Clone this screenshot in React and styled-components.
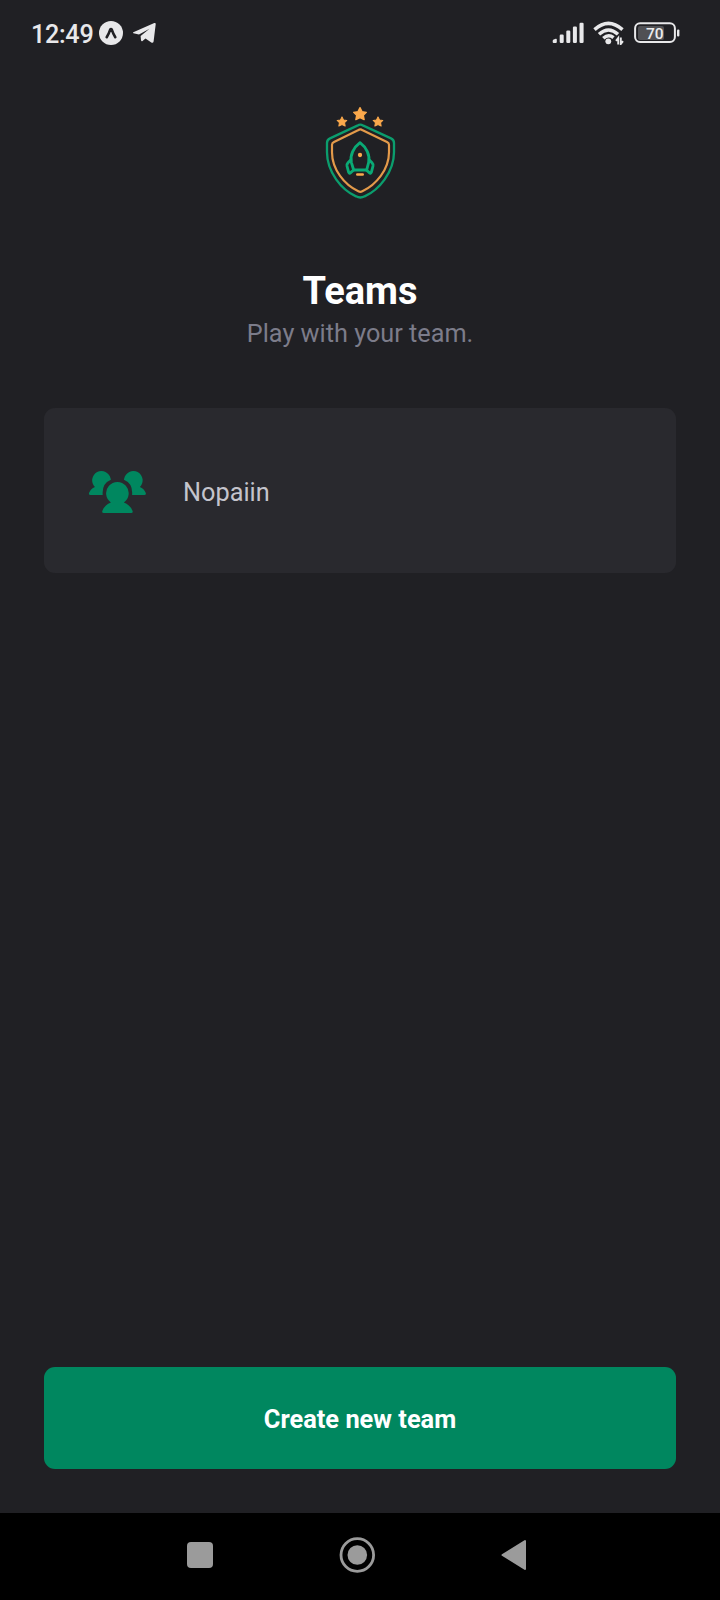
import React from "react";
import styled, { createGlobalStyle } from "styled-components";

const GlobalStyle = createGlobalStyle`
  * { box-sizing: border-box; }
  body { margin: 0; background: #202024; }
`;

const Screen = styled.div`
  width: 720px;
  height: 1600px;
  display: flex;
  flex-direction: column;
  background: #202024;
  font-family: Roboto, "Liberation Sans", sans-serif;
`;

const StatusBar = styled.header`
  height: 66px;
  flex: none;
  display: flex;
  align-items: center;
  justify-content: space-between;
  padding: 0 40px 0 31px;
  color: #e8e8ea;
`;

const StatusGroup = styled.div`
  display: flex;
  align-items: center;
  gap: ${(p) => p.$gap}px;
`;

const Clock = styled.span`
  width: 63px;
  font-size: 25.2px;
  font-weight: 500;
  line-height: 30px;
  letter-spacing: -0.3px;
  padding: 3px 0 0;
`;

const Icon = styled.svg`
  display: block;
  flex: none;
`;

const BatteryLabel = styled.text`
  font-family: Roboto, sans-serif;
  font-size: 15.5px;
  font-weight: 500;
  fill: #ececee;
`;

const Content = styled.main`
  flex: 1;
  display: flex;
  flex-direction: column;
  padding: 29px 44px 44px;
`;

const Logo = styled(Icon)`
  align-self: center;
`;

const Heading = styled.div`
  margin-top: 58px;
  text-align: center;
`;

const Title = styled.h1`
  margin: 0;
  font-size: 38px;
  font-weight: 700;
  line-height: 47px;
  color: #fff;
`;

const Subtitle = styled.p`
  margin: 4px 0 0;
  font-size: 25.25px;
  line-height: 30px;
  color: #7c7c8a;
`;

const TeamCard = styled.button`
  width: 100%;
  height: 165px;
  margin-top: 59px;
  padding: 3px 44px 0;
  display: flex;
  align-items: center;
  gap: 36px;
  border: 0;
  border-radius: 11px;
  background: #29292e;
  color: #c4c4cc;
  font: 400 25.3px/30px Roboto, "Liberation Sans", sans-serif;
`;

const TeamName = styled.span`
  padding-top: 2px;
`;

const PrimaryButton = styled.button`
  width: 100%;
  height: 102px;
  margin-top: auto;
  padding: 2px 0 0;
  border: 0;
  border-radius: 11px;
  background: #00875f;
  color: #fff;
  font: 700 25.4px/30px Roboto, "Liberation Sans", sans-serif;
`;

const NavBar = styled.nav`
  height: 87px;
  flex: none;
  display: flex;
  align-items: center;
  justify-content: center;
  gap: 117px;
  padding: 0 6px 3px 0;
  background: #000;
`;

const STAR = "M0 -19L6 -7L19 -5L10 4L12.500 17L0 11L-12.500 17L-10 4L-19 -5L-6 -7Z";

function Crest() {
  return (
    <Logo width="100" height="115" viewBox="0 0 300 345" fill="none" strokeLinejoin="round" strokeLinecap="round">
      <g fill="#fba94c" stroke="#fba94c" strokeWidth="4">
        <path d={STAR} transform="translate(150 57)" />
        <path d={STAR} transform="translate(96 80) scale(.76)" />
        <path d={STAR} transform="translate(204 80) scale(.76)" />
      </g>
      <path
        d="M151 89Q155 89 160 92L243 130Q252 134 252 144V172C252 231 207 285 164 304Q151 311 138 304C95 285 51 231 51 172V144Q51 134 60 130L142 92Q147 89 151 89Z"
        stroke="#0b9d6d" strokeWidth="7"
      />
      <path
        d="M151 103Q154 103 158 106L231 141Q237 144 237 149V172C237 224 198 270 157 289Q151 292 145 289C104 270 66 224 66 172V149Q66 144 72 141L144 106Q148 103 151 103Z"
        stroke="#e39a4a" strokeWidth="6.500"
      />
      <g stroke="#0aaa75" strokeWidth="8.500">
        <path d="M150 143C131 157 119 181 124 202L131 225H170L176 202C181 181 169 157 150 143Z" />
        <path d="M122 195L114 203Q110 207 111 213L116 232Q118 237 122 233L131 225" />
        <path d="M178 195L186 203Q190 207 189 213L184 232Q182 237 178 233L169 225" />
      </g>
      <circle cx="150" cy="180" r="6.500" fill="#fba94c" />
      <path d="M142 238.500H158" stroke="#fba94c" strokeWidth="8" />
    </Logo>
  );
}

function ExpoIcon() {
  return (
    <Icon width="24" height="24" viewBox="0 0 24 24">
      <circle cx="12" cy="12" r="12" fill="#e8e8ea" />
      <path d="M7.700 16.200Q10 12.500 11.200 8.600Q12 7.500 12.800 8.600Q14 12.500 16.300 16.200" fill="none" stroke="#202024" strokeWidth="2.600" strokeLinecap="round" strokeLinejoin="round" />
    </Icon>
  );
}

function TelegramIcon() {
  return (
    <Icon width="24" height="22" viewBox="0 0 24 22">
      <path d="M.3 10.300L21.300 1Q22.900.6 22.700 2.200L20.600 19.500Q20.100 21.500 18.300 20.500L12.500 16.600L9.500 19Q8.300 19.700 8 18L7.600 14L16.500 6.800L6 12.400L.4 11.200Q-.3 10.800.3 10.300Z" fill="#e8e8ea" />
    </Icon>
  );
}

function SignalIcon() {
  return (
    <Icon width="32" height="22" viewBox="0 0 32 22" fill="#e8e8ea">
      <path d="M.7 19Q.7 18 1.700 17.600L3.700 16.800Q4.800 16.500 4.800 17.500V20Q4.800 21 3.800 21H1.700Q.7 21 .7 20Z" />
      <rect x="7.700" y="12.500" width="4" height="8.500" rx="1.200" />
      <rect x="14.300" y="8.500" width="4" height="12.500" rx="1.200" />
      <rect x="20.900" y="4.500" width="4" height="16.500" rx="1.200" />
      <rect x="27.500" y=".7" width="4.100" height="20.300" rx="1.200" />
    </Icon>
  );
}

function WifiIcon() {
  return (
    <Icon width="32" height="24" viewBox="0 0 32 24" fill="none" stroke="#e8e8ea">
      <path d="M1.500 8.600Q15.300 -3.800 29.500 8.600M6 13.200Q15.500 4.800 25 13.200M10.300 17.200Q15.500 12.600 20.500 16.700" strokeWidth="3.500" />
      <circle cx="15.300" cy="20.300" r="2.900" fill="#e8e8ea" stroke="none" />
      <path d="M25.200 23.500V17L23 19.800M27.800 16.500V23L30 20.200" strokeWidth="1.900" />
    </Icon>
  );
}

function BatteryIcon() {
  return (
    <Icon width="46" height="22" viewBox="0 0 46 22">
      <rect x="4" y="4" width="26" height="14" rx="2" fill="#505054" />
      <rect x="1.100" y="1.300" width="39.800" height="18.600" rx="5" fill="none" stroke="#e8e8ea" strokeWidth="2" />
      <rect x="43" y="7.500" width="2.400" height="7" rx="1" fill="#e8e8ea" />
      <BatteryLabel x="20.700" y="16.500" textAnchor="middle">70</BatteryLabel>
    </Icon>
  );
}

function TeamIcon() {
  return (
    <Icon width="59" height="58" viewBox="0 0 59 58" fill="#00875f">
      <path d="M22.600 15.600A9.300 9.300 0 1 0 6.900 23.900Q2.800 25.500 1 30Q.6 31.900 2.400 32H14.700Q13.700 20.500 22.900 16.800Z" />
      <path d="M36.200 15.600A9.300 9.300 0 1 1 51.900 23.900Q56 25.500 57.800 30Q58.200 31.900 56.400 32H44.100Q45.100 20.500 35.900 16.800Z" />
      <path d="M22.900 39.500A11.300 11.300 0 1 1 35.900 39.500Q42 41.900 44.600 47.900Q45.200 49.900 43.200 50H15.700Q13.700 49.900 14.300 47.900Q16.700 41.900 22.900 39.500Z" />
    </Icon>
  );
}

export default function App() {
  return (
    <Screen>
      <GlobalStyle />
      <StatusBar>
        <StatusGroup $gap={10}>
          <StatusGroup $gap={5}>
            <Clock>12:49</Clock>
            <ExpoIcon />
          </StatusGroup>
          <TelegramIcon />
        </StatusGroup>
        <StatusGroup $gap={9}>
          <SignalIcon />
          <WifiIcon />
          <BatteryIcon />
        </StatusGroup>
      </StatusBar>
      <Content>
        <Crest />
        <Heading>
          <Title>Teams</Title>
          <Subtitle>Play with your team.</Subtitle>
        </Heading>
        <TeamCard>
          <TeamIcon />
          <TeamName>Nopaiin</TeamName>
        </TeamCard>
        <PrimaryButton>Create new team</PrimaryButton>
      </Content>
      <NavBar>
        <Icon width="40" height="40" viewBox="0 0 40 40">
          <rect x="7" y="7" width="26" height="26" rx="4" fill="#9b9b9b" />
        </Icon>
        <Icon width="40" height="40" viewBox="0 0 40 40">
          <circle cx="20.300" cy="20" r="16.300" fill="none" stroke="#9b9b9b" strokeWidth="2.800" />
          <circle cx="20.300" cy="20" r="9.800" fill="#9b9b9b" />
        </Icon>
        <Icon width="40" height="40" viewBox="0 0 40 40">
          <path d="M8.500 20L31 6V34Z" fill="#9b9b9b" stroke="#9b9b9b" strokeWidth="2" strokeLinejoin="round" />
        </Icon>
      </NavBar>
    </Screen>
  );
}
